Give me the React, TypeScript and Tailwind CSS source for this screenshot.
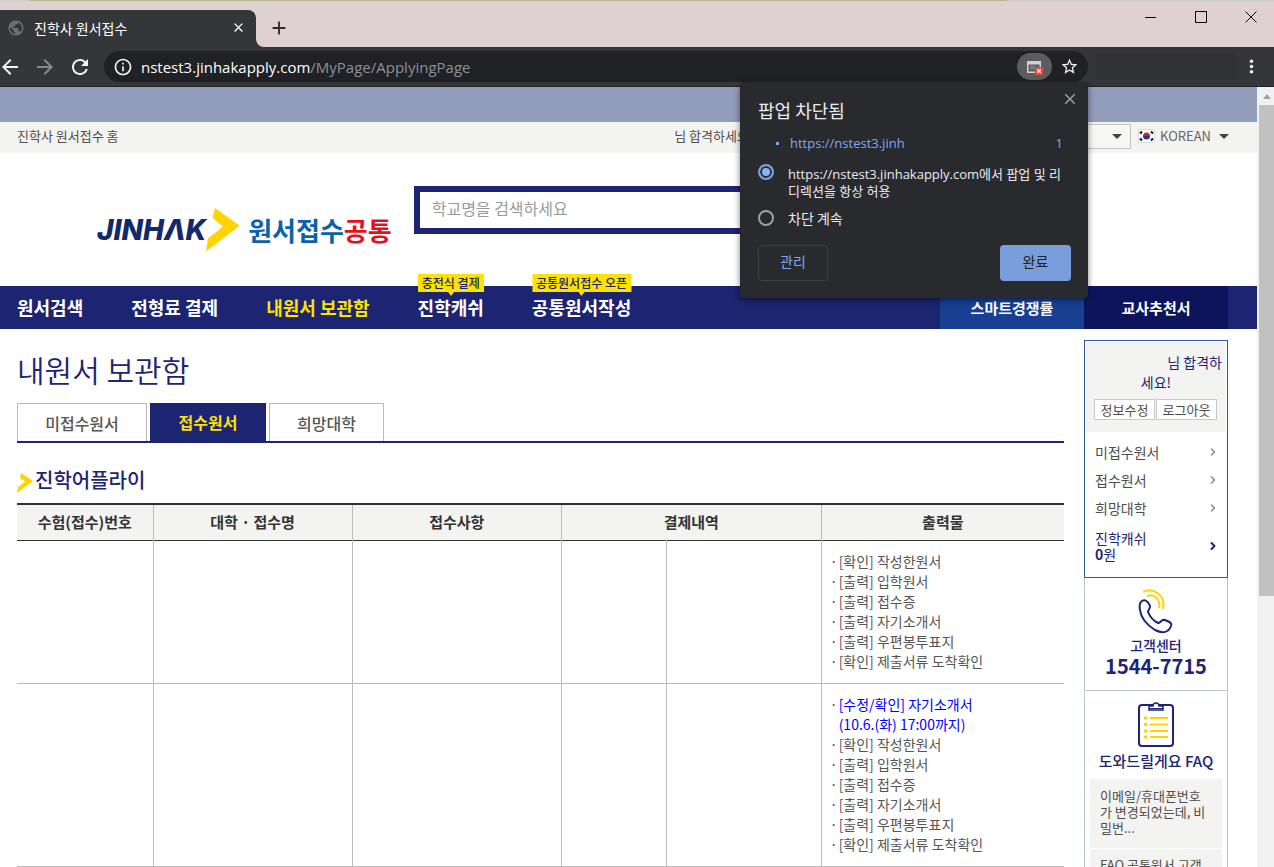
import React from "react";
import {
  MdAdd,
  MdArrowBack,
  MdArrowForward,
  MdClose,
  MdMoreVert,
  MdOutlineInfo,
  MdPublic,
  MdRefresh,
  MdStarOutline,
} from "react-icons/md";
import { ChevronRight } from "lucide-react";

function Balloon({ text }: { text: string }) {
  return (
    <span className="absolute -top-3 left-1/2 -translate-x-1/2 whitespace-nowrap bg-[#fbe200] px-1 text-xs leading-[18px] font-medium text-[#1d2472]">
      {text}
      <svg className="absolute left-1/2 top-full -ml-[3px]" width="6" height="4" viewBox="0 0 6 4">
        <path d="M0 0h6L3 4z" fill="#fbe200" />
      </svg>
    </span>
  );
}

function BrowserChrome() {
  return (
    <header className="shrink-0 bg-[#dfd1d1]">
      <div className="flex h-px">
        <div className="w-[30px] bg-[#cfcccc]" />
        <div className="flex-1 bg-[#b5b68c]" />
        <div className="w-[267px] bg-[#cbc8c8]" />
      </div>
      <div className="flex h-[46px] items-end">
        <div className="flex h-[37px] w-64 items-center rounded-tr-lg bg-[#35363a] pb-0.5 pl-[7px] pr-2 text-white">
          <MdPublic size={18} className="text-[#6c6f73]" />
          <span className="ml-[9px] flex-1 text-sm leading-5">진학사 원서접수</span>
          <button aria-label="탭 닫기" className="flex h-5 w-5 items-center justify-center">
            <MdClose size={15} />
          </button>
        </div>
        <svg width="8" height="8" viewBox="0 0 8 8">
          <path d="M0 0a8 8 0 0 0 8 8H0z" fill="#35363a" />
        </svg>
        <button aria-label="새 탭" className="mb-2 ml-1 text-[#2b2b2e]">
          <MdAdd size={22} />
        </button>
        <div className="mb-6 ml-auto flex items-center gap-[38px] pr-[17px] text-black">
          <button aria-label="최소화">
            <svg width="12" height="12" viewBox="0 0 12 12">
              <path d="M0 6.5h11" stroke="currentColor" />
            </svg>
          </button>
          <button aria-label="최대화">
            <svg width="12" height="12" viewBox="0 0 12 12">
              <path d="M.5 .5h11v11H.5z" fill="none" stroke="currentColor" />
            </svg>
          </button>
          <button aria-label="닫기">
            <svg width="12" height="12" viewBox="0 0 12 12">
              <path d="M.5 .5l11 11M11.5 .5l-11 11" stroke="currentColor" />
            </svg>
          </button>
        </div>
      </div>
      <div className="flex h-10 items-center border-b border-[#222326] bg-[#35363a] text-[#f1f3f4]">
        <div className="-ml-0.5 flex gap-[11px]">
          <button aria-label="뒤로">
            <MdArrowBack size={24} />
          </button>
          <button aria-label="앞으로" className="text-[#87898c]">
            <MdArrowForward size={24} />
          </button>
          <button aria-label="새로고침">
            <MdRefresh size={24} />
          </button>
        </div>
        <div className="ml-3 flex h-[31px] flex-1 items-center rounded-full bg-[#202124] pl-[9px] pr-[9px]">
          <MdOutlineInfo size={20} />
          <p className="ml-2 flex-1 font-['Open_Sans','Noto_Sans',sans-serif] text-[15px] leading-5 text-white">
            nstest3.jinhakapply.com<span className="text-[#8c9196]">/MyPage/ApplyingPage</span>
          </p>
          <button aria-label="팝업 차단됨" className="flex h-[27px] w-[35px] items-center justify-center rounded-full bg-[#5b5c5f]">
            <svg width="17" height="16" viewBox="0 0 17 16">
              <path d="M1 2h14v12H1z" fill="#d0d1d3" />
              <path d="M2.500 5.500h11v7h-11z" fill="#5b5c5f" />
              <path d="M4 7.500h5M4 9.500h5" stroke="#909193" />
              <path d="M9 8h8v8H9z" fill="#e8453c" />
              <path d="M11.200 10.200l3.600 3.600M14.800 10.200l-3.600 3.600" stroke="#fff" strokeWidth="1.300" />
            </svg>
          </button>
          <button aria-label="북마크" className="ml-2">
            <MdStarOutline size={19} />
          </button>
        </div>
        <div className="ml-2 h-[27px] w-[141px] bg-[#313236]" />
        <button aria-label="메뉴" className="ml-1 mr-3">
          <MdMoreVert size={21} />
        </button>
      </div>
    </header>
  );
}

function PopupDialog() {
  return (
    <section
      role="dialog"
      aria-label="팝업 차단됨"
      className="absolute right-[186px] top-[82px] z-20 w-[348px] rounded-sm bg-[#292a2d] pb-[17px] pl-[18px] pr-[17px] pt-2 text-sm text-[#e8eaed] shadow-[0_2px_6px_rgba(0,0,0,0.5)]"
    >
      <div className="flex justify-end">
        <button aria-label="닫기" className="-mr-2 text-[#9aa0a6]">
          <MdClose size={18} />
        </button>
      </div>
      <h2 className="-mt-2.5 text-lg leading-6">팝업 차단됨</h2>
      <div className="mt-3 flex items-center pl-[18px] pr-2 font-['Open_Sans','Noto_Sans',sans-serif] text-[13px] leading-[18px] text-[#7da7f4]">
        <span className="h-[3px] w-[3px] bg-[#7da7f4]" />
        <a href="#popup" className="ml-[11px] flex-1">https://nstest3.jinh</a>
        <span>1</span>
      </div>
      <div className="mt-3.5 flex items-start gap-3.5">
        <input
          id="allow"
          type="radio"
          name="popup"
          defaultChecked
          className="-mt-0.5 h-4 w-4 shrink-0 appearance-none rounded-full border-2 border-[#9aa0a6] checked:border-[#7b9fde] checked:bg-[#8ab4f8] checked:shadow-[inset_0_0_0_2px_#292a2d]"
        />
        <label htmlFor="allow" className="whitespace-nowrap font-['Open_Sans','Noto_Sans_CJK_KR',sans-serif] text-[13px] leading-[17px]">
          https://nstest3.jinhakapply.com에서 팝업 및 리
          <br />
          디렉션을 항상 허용
        </label>
      </div>
      <div className="mt-2 flex items-center gap-3.5">
        <input
          id="block"
          type="radio"
          name="popup"
          className="h-4 w-4 appearance-none rounded-full border-2 border-[#9aa0a6] checked:border-[#7b9fde] checked:bg-[#8ab4f8] checked:shadow-[inset_0_0_0_2px_#292a2d]"
        />
        <label htmlFor="block" className="leading-5">차단 계속</label>
      </div>
      <div className="mt-[17px] flex justify-between">
        <button className="h-9 w-[70px] rounded border border-[#3f4043] pb-1 text-[#7da7f4]">관리</button>
        <button className="h-9 w-[71px] rounded bg-[#7a9edb] pb-1 text-[#202124]">완료</button>
      </div>
    </section>
  );
}

function SiteHeader() {
  return (
    <>
      <div className="h-[35px] bg-[#929cbb]" />
      <div className="flex h-[31px] items-center bg-[#f3f3f1] pb-[3px] pl-[17px] pr-7 text-[13px] text-[#4d4d4d]">
        <a href="#home">진학사 원서접수 홈</a>
        <span className="ml-auto">님 합격하세요!</span>
        <div className="ml-7 flex h-[25px] w-[350px] items-center border border-[#c4c4c4] bg-[#f6f6f5]">
          <select aria-label="서비스 바로가기" className="h-full flex-1 appearance-none bg-transparent" />
          <svg className="mr-2" width="10" height="5" viewBox="0 0 10 5">
            <path d="M0 0h10L5 5z" fill="#444" />
          </svg>
        </div>
        <svg className="ml-[7px]" width="17" height="14" viewBox="0 0 17 14">
          <path d="M.5 .5h16v13H.5z" fill="#fff" stroke="#ddd" />
          <path d="M5 7a3.500 3.500 0 0 1 7 0z" fill="#d8202f" />
          <path d="M5 7a3.500 3.500 0 0 0 7 0z" fill="#173c8f" />
          <path d="M2 4.500l2-2M13 2.500l2 2M2 9.500l2 2M13 11.500l2-2" stroke="#111" strokeWidth="2" />
        </svg>
        <button className="ml-[5px] flex items-center gap-2 text-[#666]">
          <span>KOREAN</span>
          <svg width="10" height="5" viewBox="0 0 10 5">
            <path d="M0 0h10L5 5z" fill="#444" />
          </svg>
        </button>
      </div>
      <div className="flex h-[133px] items-start pl-[97px] pt-[33px]">
        <a href="#main" aria-label="JINHAK 원서접수공통" className="mt-[22px] flex items-center">
          <span className="font-['Inter',sans-serif] text-[28px] leading-[44px] font-extrabold italic text-[#12296b]">JINHΛK</span>
          <svg width="34" height="44" viewBox="0 0 34 44">
            <path d="M9 0L33.700 17.700L0 43.500L2 30.500L17 18.500L6.500 10z" fill="#ffd400" />
          </svg>
          <span className="ml-2 whitespace-nowrap text-[26px] leading-[44px] font-bold text-[#0b61ad]">
            원서접수<span className="text-[#e60f1e]">공통</span>
          </span>
        </a>
        <input
          aria-label="학교명 검색"
          placeholder="학교명을 검색하세요"
          className="ml-[22px] h-12 w-[600px] border-[6px] border-[#1d2472] px-3 pb-1 text-base text-[#333] placeholder:text-[#999]"
        />
      </div>
      <nav className="flex h-[43px] items-center bg-[#1d2472] pl-[17px] pr-[29px] text-lg font-semibold text-white">
        <div className="flex flex-1 gap-12 leading-[43px] whitespace-nowrap">
          <a href="#search">원서검색</a>
          <a href="#pay">전형료 결제</a>
          <a href="#box" className="text-[#fbe200]">내원서 보관함</a>
          <a href="#cash" className="relative">
            진학캐쉬
            <Balloon text="충전식 결제" />
          </a>
          <a href="#common" className="relative">
            공통원서작성
            <Balloon text="공통원서접수 오픈" />
          </a>
        </div>
        <a href="#rate" className="w-36 bg-[#174092] text-center text-[15px] leading-[43px]">스마트경쟁률</a>
        <a href="#teacher" className="w-36 bg-[#0e145c] text-center text-[15px] leading-[43px]">교사추천서</a>
      </nav>
    </>
  );
}

const documents = [
  "[확인] 작성한원서",
  "[출력] 입학원서",
  "[출력] 접수증",
  "[출력] 자기소개서",
  "[출력] 우편봉투표지",
  "[확인] 제출서류 도착확인",
];

function DocumentList({ edit = false }: { edit?: boolean }) {
  return (
    <ul className="text-sm leading-5 text-[#555]">
      {edit && (
        <li className="flex">
          <span className="w-[9px]">·</span>
          <a href="#edit" className="text-[#0000ff]">
            [수정/확인] 자기소개서
            <br />
            (10.6.(화) 17:00까지)
          </a>
        </li>
      )}
      {documents.map((name) => (
        <li key={name} className="flex">
          <span className="w-[9px]">·</span>
          <a href="#doc">{name}</a>
        </li>
      ))}
    </ul>
  );
}

function ApplicationRow({ edit = false }: { edit?: boolean }) {
  return (
    <tr className="border-b border-[#bbb]">
      <td className="border-r border-[#bbb]" />
      <td className="border-r border-[#bbb]" />
      <td className="border-r border-[#bbb]" />
      <td className="border-r border-[#bbb]" />
      <td className="border-r border-[#bbb]" />
      <td className="pb-3 pl-2 pt-2.5">
        <DocumentList edit={edit} />
      </td>
    </tr>
  );
}

function Applications() {
  return (
    <main className="min-w-0 flex-1 pt-[18px]">
      <h1 className="text-[30px] leading-[44px] font-[350] text-[#1d2472]">내원서 보관함</h1>
      <div className="mt-3 flex h-10 gap-[3px] border-b-2 border-[#1d2472] text-base font-medium text-[#555]">
        <button className="w-[130px] border border-b-0 border-[#bbb]">미접수원서</button>
        <button className="w-[116px] bg-[#1d2472] font-bold text-[#fbe200]">접수원서</button>
        <button className="w-[115px] border border-b-0 border-[#bbb]">희망대학</button>
      </div>
      <h2 className="mt-[22px] flex items-center gap-0.5 text-xl leading-[30px] font-medium text-[#1d2472]">
        <svg className="mt-1.5" width="16" height="20" viewBox="0 0 16 20">
          <path d="M4 0L16 8L0 20L1 14L8 8.500L3 5z" fill="#ffd400" />
        </svg>
        진학어플라이
      </h2>
      <table className="mt-2 w-full table-fixed border-collapse">
        <colgroup>
          <col className="w-[13%]" />
          <col className="w-[19%]" />
          <col className="w-[20%]" />
          <col className="w-[10%]" />
          <col className="w-[155px]" />
          <col />
        </colgroup>
        <thead>
          <tr className="h-9 border-b border-t-2 border-b-[#333] border-t-[#333] bg-[#f3f3f1] text-[15px] leading-5 text-[#333]">
            <th className="border-r border-r-[#bbb]">수험(접수)번호</th>
            <th className="border-r border-r-[#bbb]">대학 · 접수명</th>
            <th className="border-r border-r-[#bbb]">접수사항</th>
            <th colSpan={2} className="border-r border-r-[#bbb]">결제내역</th>
            <th>출력물</th>
          </tr>
        </thead>
        <tbody>
          <ApplicationRow />
          <ApplicationRow edit />
        </tbody>
      </table>
    </main>
  );
}

function Sidebar() {
  return (
    <aside className="w-36 shrink-0 pt-[11px]">
      <section className="h-[238px] border border-[#35599b] p-px text-sm text-[#4d4d4d]">
        <div className="bg-[#f3f3f1] pb-3 pt-2.5 leading-5 text-[#1d2472]">
          <p className="pr-1 text-right">님 합격하</p>
          <p className="text-center">세요!</p>
          <div className="mt-[7px] flex justify-center gap-px pr-px text-[13px] text-[#4d4d4d]">
            <button className="h-[21px] w-[61px] border border-[#c8c8c8] bg-white leading-[19px]">정보수정</button>
            <button className="h-[21px] w-[61px] border border-[#c8c8c8] bg-white leading-[19px]">로그아웃</button>
          </div>
        </div>
        <ul className="pl-[9px] pr-[7px] pt-1.5 leading-7">
          {["미접수원서", "접수원서", "희망대학"].map((name) => (
            <li key={name}>
              <a href="#menu" className="flex items-center justify-between">
                {name}
                <ChevronRight size={12} strokeWidth={3} className="text-[#888]" />
              </a>
            </li>
          ))}
          <li>
            <a href="#cash" className="mt-2 flex items-center justify-between leading-4 text-[#1d2472]">
              <span>
                진학캐쉬
                <br />
                <b>0</b>원
              </span>
              <ChevronRight size={12} strokeWidth={4} />
            </a>
          </li>
        </ul>
      </section>
      <div className="border-x border-[#bfc5cf] text-center text-[#1d2472]">
        <section className="flex flex-col items-center border-b border-[#bfc5cf] pb-3 pt-2.5">
          <svg width="36" height="48" viewBox="0 0 36 48" fill="none" strokeWidth="2">
            <path d="M5 4C14-1 28 6 25 21M9 8C16 5 23 12 21 20" stroke="#ffd400" />
            <path d="M2 22C0 11 8 10 11 16C14 20 10 21 10 24C12 29 16 33 20 35C23 35 23 31 27 32C32 34 34 35 33 38C30 46 23 45 17 42C9 37 3 30 2 22Z" stroke="#1d2472" />
          </svg>
          <h3 className="text-sm leading-[18px] font-medium">고객센터</h3>
          <p className="text-xl leading-6 font-bold">1544-7715</p>
        </section>
        <section className="pt-2.5">
          <svg className="mx-auto" width="36" height="46" viewBox="0 0 36 46" fill="none">
            <path d="M4 4h28a3 3 0 0 1 3 3v35a3 3 0 0 1-3 3H4a3 3 0 0 1-3-3V7a3 3 0 0 1 3-3z" stroke="#1d2472" strokeWidth="2" />
            <path d="M11 9h14V5h-4a3 3 0 0 0-6 0h-4z" fill="#fff" stroke="#1d2472" strokeWidth="1.500" />
            <path d="M11 7.500h14" stroke="#1d2472" />
            <path d="M12 17h18M12 23.500h18M12 30h18M12 36h18" stroke="#ffd400" strokeWidth="2" />
            <path d="M6 17h3M6 23.500h3M6 30h3M6 36h3" stroke="#ffd400" strokeWidth="3" />
          </svg>
          <h3 className="mt-1 whitespace-nowrap text-[15px] leading-5 font-medium">도와드릴게요 FAQ</h3>
          <div className="mx-[5px] mt-2 flex flex-col gap-px text-left text-[13px] leading-4 text-[#4d4d4d]">
            <a href="#faq1" className="bg-[#f3f3f1] px-2.5 pb-3 pt-[9px] break-all">
              이메일/휴대폰번호
              <br />가 변경되었는데, 비
              <br />
              밀번...
            </a>
            <a href="#faq2" className="bg-[#f3f3f1] px-2.5 pb-3 pt-2 whitespace-nowrap">FAQ 공통원서 고객</a>
          </div>
        </section>
      </div>
    </aside>
  );
}

function Scrollbar() {
  return (
    <div className="flex w-[17px] shrink-0 flex-col bg-[#f1f1f1] pl-0.5">
      <div className="flex h-[18px] items-center justify-center">
        <svg width="8" height="5" viewBox="0 0 8 5">
          <path d="M0 5h8L4 0z" fill="#a3a3a3" />
        </svg>
      </div>
      <div className="h-[63%] bg-[#c1c1c1]" />
    </div>
  );
}

export default function App() {
  return (
    <div className="relative flex h-screen flex-col overflow-hidden bg-white font-['Noto_Sans_CJK_KR',sans-serif]">
      <BrowserChrome />
      <div className="flex min-h-0 flex-1">
        <div className="min-w-0 flex-1 overflow-hidden">
          <SiteHeader />
          <div className="flex gap-5 pl-[17px] pr-[29px]">
            <Applications />
            <Sidebar />
          </div>
        </div>
        <Scrollbar />
      </div>
      <PopupDialog />
    </div>
  );
}
